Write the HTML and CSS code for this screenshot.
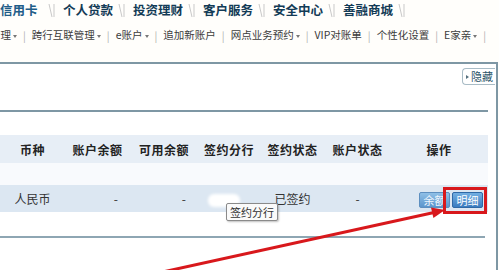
FILE: index.html
```html
<!DOCTYPE html>
<html lang="zh-CN">
<head>
  <meta charset="UTF-8">
  <title>个人网银 - 账户查询</title>
  <link rel="stylesheet" href="styles.css">
</head>
<body>
  <div class="topnav">
    <a class="first">信用卡</a>
    <span class="sep"><svg width="8" height="15" viewBox="0 0 8 15"><path d="M1 1 L4 14 M6 1 L6 14" stroke="#c9c9c9" stroke-width="1" fill="none"/></svg></span>
    <a>个人贷款</a>
    <span class="sep"><svg width="8" height="15" viewBox="0 0 8 15"><path d="M1 1 L4 14 M6 1 L6 14" stroke="#c9c9c9" stroke-width="1" fill="none"/></svg></span>
    <a>投资理财</a>
    <span class="sep"><svg width="8" height="15" viewBox="0 0 8 15"><path d="M1 1 L4 14 M6 1 L6 14" stroke="#c9c9c9" stroke-width="1" fill="none"/></svg></span>
    <a>客户服务</a>
    <span class="sep"><svg width="8" height="15" viewBox="0 0 8 15"><path d="M1 1 L4 14 M6 1 L6 14" stroke="#c9c9c9" stroke-width="1" fill="none"/></svg></span>
    <a>安全中心</a>
    <span class="sep"><svg width="8" height="15" viewBox="0 0 8 15"><path d="M1 1 L4 14 M6 1 L6 14" stroke="#c9c9c9" stroke-width="1" fill="none"/></svg></span>
    <a>善融商城</a>
    <span class="sep"><svg width="8" height="15" viewBox="0 0 8 15"><path d="M1 1 L4 14 M6 1 L6 14" stroke="#c9c9c9" stroke-width="1" fill="none"/></svg></span>
  </div>

  <div class="subnav">
    <span class="item">管理<i class="caret"></i></span><span class="bar">|</span>
    <span class="item">跨行互联管理<i class="caret"></i></span><span class="bar">|</span>
    <span class="item">e账户<i class="caret"></i></span><span class="bar">|</span>
    <span class="item">追加新账户</span><span class="bar">|</span>
    <span class="item">网点业务预约<i class="caret"></i></span><span class="bar">|</span>
    <span class="item">VIP对账单</span><span class="bar">|</span>
    <span class="item">个性化设置</span><span class="bar">|</span>
    <span class="item">E家亲<i class="caret"></i></span><span class="bar">|</span>
  </div>

  <div class="panel">
    <div class="panel-head">
      <a class="hide-tab"><i class="tri"></i>隐藏</a>
    </div>
    <div class="content">
      <table class="acct">
        <colgroup>
          <col style="width:65px"><col style="width:65px"><col style="width:68px"><col style="width:62px">
          <col style="width:65px"><col style="width:65px"><col style="width:98px">
        </colgroup>
        <tr>
          <th>币种</th><th>账户余额</th><th>可用余额</th><th>签约分行</th>
          <th>签约状态</th><th>账户状态</th><th>操作</th>
        </tr>
        <tr class="blank"><td colspan="7"></td></tr>
        <tr class="data">
          <td class="cur">人民币</td>
          <td class="num">-</td>
          <td class="num">-</td>
          <td class="branch"><span class="masked"></span></td>
          <td>已签约</td>
          <td>-</td>
          <td class="ops"><span class="btn dim">余额</span><span class="btn">明细</span></td>
        </tr>
      </table>
      <div class="foot-line"></div>
    </div>
  </div>

  <!-- 标注 -->
  <div class="tooltip">签约分行</div>
  <div class="redbox"></div>
  <svg class="arrow" width="499" height="270" viewBox="0 0 499 270">
    <line x1="158" y1="273" x2="434" y2="212.5" stroke="#d8181c" stroke-width="3"/>
    <polygon points="445,210 433.4,218 431,207.5" fill="#d8181c"/>
  </svg>
</body>
</html>
```

FILE: styles.css
```css
body {
  margin: 0;
  width: 499px;
  height: 270px;
  overflow: hidden;
  position: relative;
  font-family: "Noto Sans CJK SC", "DejaVu Sans", sans-serif;
  background-color: #fffefb;
  color: #333;
}
.topnav {
  display: flex;
  align-items: center;
  height: 20px;
  font-size: 12.5px;
  font-weight: bold;
  color: #133b56;
  white-space: nowrap;
}
.topnav a {
  width: 48px;
  line-height: 20px;
}
.topnav a.first {
  width: 41px;
  color: #1f5d88;
}
.topnav .sep {
  width: 22px;
  display: flex;
  justify-content: center;
}
.subnav {
  display: flex;
  align-items: center;
  height: 30px;
  margin-left: -10px;
  font-size: 10.5px;
  color: #3c3c3c;
  white-space: nowrap;
}
.subnav .item {
  line-height: 30px;
}
.caret {
  display: inline-block;
  margin-left: 2px;
  vertical-align: middle;
  border-left: 2.5px solid transparent;
  border-right: 2.5px solid transparent;
  border-top: 3px solid #777;
}
.subnav .bar {
  padding: 0 6px;
  color: #b0b0b0;
}
.panel {
  margin-top: 12px;
  width: 496px;
  height: 220px;
  border-top: 2px solid #7e97a4;
  border-right: 2px solid #7e97a4;
  background-color: #fff;
}
.panel-head {
  height: 46px;
  display: flex;
  justify-content: flex-end;
  align-items: flex-start;
}
.hide-tab {
  margin-top: 4px;
  margin-right: 1px;
  height: 15px;
  line-height: 15px;
  padding: 0 2px 0 3px;
  border: 1px solid #a9bcc6;
  border-right: none;
  border-radius: 4px 0 0 4px;
  font-size: 11px;
  color: #2a5468;
  display: flex;
  align-items: center;
}
.hide-tab .tri {
  display: inline-block;
  margin-right: 2px;
  border-top: 2.5px solid transparent;
  border-bottom: 2.5px solid transparent;
  border-left: 3px solid #55707e;
}
.content {
  width: 488px;
  border-top: 2px solid #7e97a4;
  padding-top: 23px;
}
.acct {
  width: 488px;
  border-collapse: collapse;
  table-layout: fixed;
  font-size: 12px;
}
.acct th {
  height: 28px;
  padding: 0;
  background-color: #e7eef6;
  font-weight: bold;
  color: #222;
  letter-spacing: 0.5px;
  text-align: center;
}
.acct td {
  padding: 0;
  text-align: center;
  white-space: nowrap;
}
.acct .blank td {
  height: 22px;
  background-color: #f8fafd;
}
.acct .data td {
  height: 27px;
  background-color: #dce7f2;
  color: #333;
}
.acct td.num {
  text-align: right;
  padding-right: 12px;
}
.acct td.branch {
  text-align: left;
  padding-left: 10px;
}
.masked {
  display: inline-block;
  width: 32px;
  height: 13px;
  vertical-align: middle;
  background-color: #fff;
  border-radius: 6px;
  filter: blur(1.5px);
}
.acct td.ops {
  text-align: right;
  padding-right: 5px;
}
.btn {
  display: inline-block;
  box-sizing: border-box;
  width: 31px;
  height: 16px;
  line-height: 14px;
  margin-left: 2px;
  border: 1px solid #2f69a6;
  border-radius: 2px;
  background: linear-gradient(#73afe2, #3a7cc0);
  color: #fff;
  font-size: 11px;
  text-align: center;
  vertical-align: middle;
}
.btn.dim {
  border-color: #5d8fc0;
  background: linear-gradient(#8fbfe6, #5b95cc);
  color: #eef5fc;
}
.foot-line {
  width: 485px;
  margin-top: 24px;
  border-top: 2px solid #8ea6b3;
}
.tooltip {
  position: absolute;
  left: 226px;
  top: 203px;
  height: 16px;
  line-height: 16px;
  padding: 0 3px;
  border: 1px solid #8a8a8a;
  border-radius: 2px;
  background-color: #fafafa;
  box-shadow: 1px 1px 2px rgba(0, 0, 0, 0.25);
  font-size: 11px;
  color: #333;
}
.redbox {
  position: absolute;
  left: 443px;
  top: 187px;
  width: 38px;
  height: 21px;
  border: 3px solid #d8181c;
}
.arrow {
  position: absolute;
  left: 0;
  top: 0;
}
```
